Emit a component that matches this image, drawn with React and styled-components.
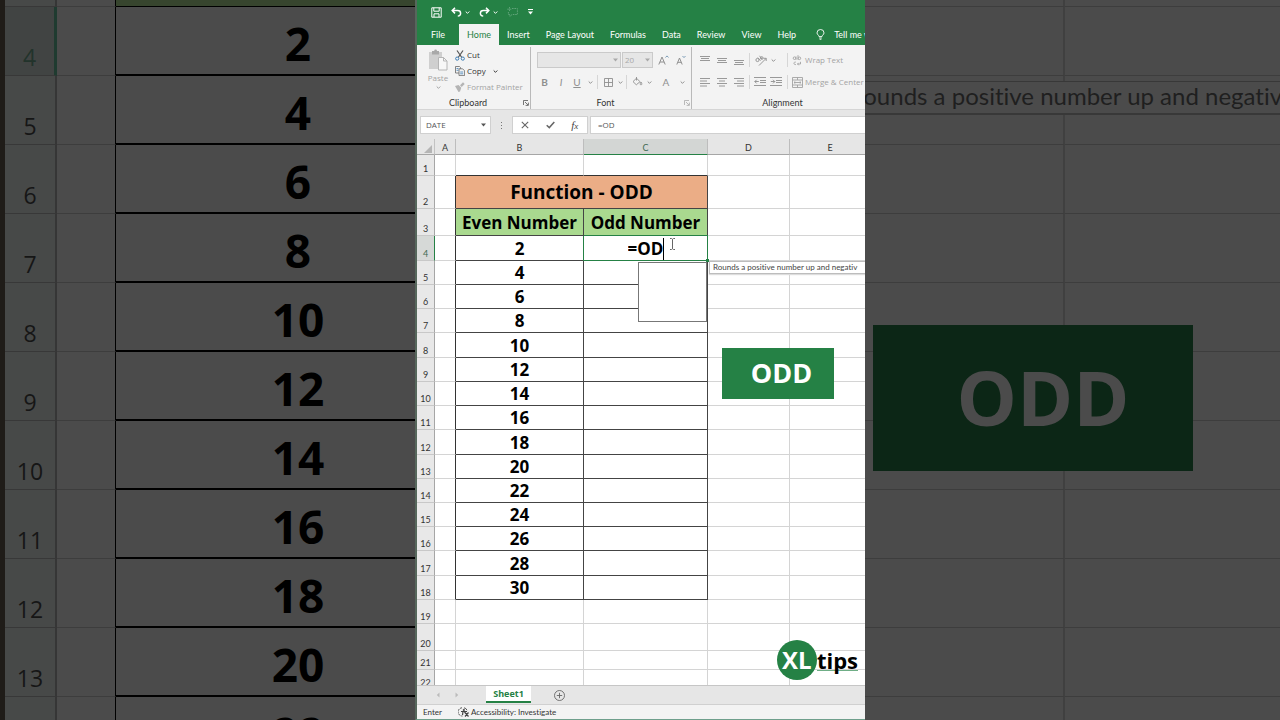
import React, { useState } from 'react';
import styled, { createGlobalStyle } from 'styled-components';

const GREEN = '#258145';
const LATO = 'Lato, "Open Sans", sans-serif';

const tabs = ['File', 'Home', 'Insert', 'Page Layout', 'Formulas', 'Data', 'Review', 'View', 'Help'];

// row number, height, value in column B
const dataRows = [
  [5, 24, 4], [6, 24, 6], [7, 24, 8], [8, 25, 10], [9, 24, 12], [10, 24, 14], [11, 24, 16],
  [12, 25, 18], [13, 24, 20], [14, 24, 22], [15, 24, 24], [16, 24, 26], [17, 25, 28], [18, 24, 30],
];
const emptyRows = [[19, 24], [20, 27], [21, 19], [22, 20]];
const bigRows = [[4, 2], [5, 4], [6, 6], [7, 8], [8, 10], [9, 12], [10, 14], [11, 16], [12, 18], [13, 20], [14, 22]];

const tip = 'Rounds a positive number up and negativ';

const Chevron = ({ color = 'currentColor' }) => (
  <svg width="5" height="5" viewBox="0 0 5 5" fill="none" stroke={color} aria-hidden="true">
    <path d="M.7 1.5 2.5 3.3 4.3 1.5" />
  </svg>
);

const Triangle = () => (
  <svg width="5" height="4" viewBox="0 0 5 4" fill="currentColor" aria-hidden="true"><path d="M0 .5h5L2.5 3.5z" /></svg>
);

const Launcher = () => (
  <svg width="6" height="6" viewBox="0 0 6 6" fill="none" stroke="currentColor" strokeWidth=".8" aria-hidden="true">
    <path d="M.5 5V.5H5M2 2l3 3M5.4 2.6v2.8H2.6" />
  </svg>
);

const Lines = ({ rows }) => (
  <svg width="10" height="9" viewBox="0 0 10 9" stroke="currentColor" strokeWidth=".9" aria-hidden="true">
    {rows.map(([x1, x2, y]) => <path key={y} d={`M${x1} ${y}H${x2}`} />)}
  </svg>
);

const Indent = ({ out }) => (
  <svg width="12" height="10" viewBox="0 0 12 10" stroke="currentColor" fill="none" strokeWidth=".9" aria-hidden="true">
    <path d="M0 .5h12M6 3.500h6M6 5.500h6M0 8.500h12M.8 4.500h4" />
    <path d={out ? 'M2.6 2.8.8 4.6l1.8 1.8' : 'M3 2.8l1.8 1.8L3 6.4'} />
  </svg>
);

const App = () => {
  const [formula, setFormula] = useState('=OD');
  const onFormulaChange = e => setFormula(e.target.value);

  return (
    <Page>
      <GlobalStyle />
      <Backdrop aria-hidden="true" $edge>
        <BigTable>
          <colgroup><col width="52" /><col width="59" /><col width="364" /></colgroup>
          <tbody>
            <BigRow $h={7}><BigHead /><BigCell $line="#000" /><BigValue $green /></BigRow>
            {bigRows.map(([n, value]) => (
              <BigRow key={n} $h={69}>
                <BigHead $active={n === 4}>{n}</BigHead>
                <BigCell $line="#000" />
                <BigValue>{value}</BigValue>
              </BigRow>
            ))}
          </tbody>
        </BigTable>
      </Backdrop>

      <Workbook>
        <TitleBar>
          <TitleButton aria-label="Save">
            <svg width="11" height="11" viewBox="0 0 11 11" fill="none" stroke="#fff">
              <path d="M.8.8h9.4v9.4H.8zM2.8.8v3.4h5.4V.8M3 10V6.8h5V10" />
            </svg>
          </TitleButton>
          <TitleButton aria-label="Undo">
            <svg width="11" height="10" viewBox="0 0 11 10" fill="none" stroke="#fff" strokeWidth="1.5">
              <path d="M4 .8 1.2 3.6 4 6.4M1.4 3.6h5.2c4 0 4 5.4.2 5.4" />
            </svg>
            <Chevron />
          </TitleButton>
          <TitleButton aria-label="Redo">
            <svg width="11" height="10" viewBox="0 0 11 10" fill="none" stroke="#fff" strokeWidth="1.5">
              <path d="M7 .8l2.8 2.8L7 6.4M9.6 3.6H4.4C.4 3.6.4 9 4.2 9" />
            </svg>
            <Chevron />
          </TitleButton>
          <TitleButton aria-label="New comment" disabled>
            <svg width="11" height="10" viewBox="0 0 11 10" fill="none" stroke="#5fa378" strokeDasharray="1.6 .8">
              <path d="M5 1.5h5.4v6H5L3 9.4V7.5H1.4V5M2.5 0v4.4M.3 2.2h4.4" />
            </svg>
          </TitleButton>
          <TitleButton aria-label="Customize toolbar">
            <svg width="7" height="6" viewBox="0 0 7 6" fill="#fff"><path d="M1 0h5v1H1zM1 2.6h5L3.5 5.4z" /></svg>
          </TitleButton>
        </TitleBar>

        <TabBar>
          {tabs.map(name => <Tab key={name} $active={name === 'Home'}>{name}</Tab>)}
          <TellMe>
            <svg width="9" height="11" viewBox="0 0 9 11" fill="none" stroke="#fff" strokeWidth=".9">
              <path d="M3 7.6C3 6.2 1 5.600 1 3.900a3.500 3.400 0 0 1 7 0C8 5.600 6 6.200 6 7.600zM3.200 9h2.600M3.600 10.300h1.800" />
            </svg>
            Tell me what
          </TellMe>
        </TabBar>

        <Ribbon>
          <Group $w={114}>
            <ClipboardBody>
              <PasteButton disabled>
                <svg width="20" height="22" viewBox="0 0 20 22">
                  <path d="M1 3h13v17H1z" fill="#cfcfcf" />
                  <path d="M4 3.500V2h2.200a1.400 1.400 0 0 1 2.800 0H11v3.500H4z" fill="#a9a9a9" />
                  <path d="M10.500 8.500h5l3.500 3.500v9h-8.500z" fill="#f7f7f7" stroke="#b5b5b5" />
                  <path d="M15.500 8.500V12H19" fill="none" stroke="#b5b5b5" />
                </svg>
                Paste
                <Chevron />
              </PasteButton>
              <ClipboardList>
                <RibbonButton>
                  <svg width="10" height="11" viewBox="0 0 10 11" fill="none">
                    <path d="M2 .5l4.800 7M8 .5L3.200 7.500" stroke="#555" strokeWidth="1.200" />
                    <circle cx="2.200" cy="8.600" r="1.600" stroke="#3f7fb5" /><circle cx="7.800" cy="8.600" r="1.600" stroke="#3f7fb5" />
                  </svg>
                  Cut
                </RibbonButton>
                <RibbonButton>
                  <svg width="10" height="10" viewBox="0 0 10 10" fill="#f3f3f3" stroke="#666" strokeWidth=".8">
                    <path d="M.5.500h4l1 1V7h-5z" /><path d="M4 2.800h3.600l2 2v4.800H4z" />
                    <path d="M1.500 2.500h2M1.500 4.300h2M5.200 6h3M5.200 7.800h3" stroke="#3f7fb5" />
                  </svg>
                  Copy
                  <Spacer />
                  <Chevron />
                </RibbonButton>
                <RibbonButton disabled>
                  <svg width="10" height="10" viewBox="0 0 10 10" fill="#b4b4b4">
                    <path d="M0 4l3.500-1 2.800 2.800L5 9.500 3.500 10z" /><path d="M5 3.200 8 .3l1.700 1.700-3 2.900z" />
                  </svg>
                  Format Painter
                </RibbonButton>
              </ClipboardList>
            </ClipboardBody>
            <GroupLabel>Clipboard</GroupLabel>
            <GroupMore aria-label="Clipboard options"><Launcher /></GroupMore>
          </Group>

          <Group $w={161}>
            <ToolRow $left={6} $gap={1}>
              <Combo $w={84}><select aria-label="Font name" disabled><option> </option></select><Triangle /></Combo>
              <Combo $w={31}><select aria-label="Font size" disabled><option>20</option></select><Triangle /></Combo>
              <Tool $w={18} aria-label="Increase font size" disabled>
                <svg width="11" height="10" viewBox="0 0 11 10" fill="none" stroke="currentColor">
                  <path d="M.8 9.500 4 2l3.200 7.500M2 7h4" /><path d="M7.500 2.500 9 .9l1.500 1.600" stroke="#7d9db8" />
                </svg>
              </Tool>
              <Tool $w={16} aria-label="Decrease font size" disabled>
                <svg width="10" height="10" viewBox="0 0 10 10" fill="none" stroke="currentColor">
                  <path d="M.8 9.500 3.500 3l2.700 6.500M1.800 7.300h3.400" /><path d="M6.500 1 8 2.600 9.500 1" stroke="#7d9db8" />
                </svg>
              </Tool>
            </ToolRow>
            <ToolRow $left={5}>
              <Tool $w={17} disabled><b>B</b></Tool>
              <Tool $w={16} disabled><i>I</i></Tool>
              <Tool $w={16} disabled><u>U</u></Tool>
              <Tool $w={10} aria-label="Underline styles" disabled><Chevron /></Tool>
              <Divider />
              <Tool $w={17} aria-label="Borders" disabled>
                <svg width="11" height="11" viewBox="0 0 11 11" fill="none" stroke="currentColor" strokeWidth=".9"><path d="M1.500 1.500h8v8h-8zM5.500 1.500v8M1.500 5.500h8" /></svg>
              </Tool>
              <Tool $w={7} aria-label="Border styles" disabled><Chevron /></Tool>
              <Divider />
              <Tool $w={17} aria-label="Fill color" disabled>
                <svg width="11" height="10" viewBox="0 0 11 10" fill="none" stroke="currentColor" strokeWidth=".9">
                  <path d="M4.500 1.200 8 4.700 4.300 7.800 1 4.600zM4.500 0v3.500M9 5c1.400 2 .9 2.800 0 2.800S7.700 7 9 5" />
                </svg>
              </Tool>
              <Tool $w={7} aria-label="Fill colors" disabled><Chevron /></Tool>
              <Tool $w={26} disabled>A</Tool>
              <Tool $w={6} aria-label="Font colors" disabled><Chevron /></Tool>
            </ToolRow>
            <GroupLabel>Font</GroupLabel>
            <GroupMore aria-label="Font options" $dim><Launcher /></GroupMore>
          </Group>

          <Group $w={193}>
            <ToolRow $left={4}>
              <Tool $w={17} aria-label="Top align" disabled><Lines rows={[[0, 10, 0.5], [1, 9, 2.5], [0, 10, 4.5]]} /></Tool>
              <Tool $w={17} aria-label="Middle align" disabled><Lines rows={[[0, 10, 2.5], [1, 9, 4.5], [0, 10, 6.5]]} /></Tool>
              <Tool $w={17} aria-label="Bottom align" disabled><Lines rows={[[0, 10, 4.5], [1, 9, 6.5], [0, 10, 8.5]]} /></Tool>
              <Divider />
              <Tool $w={18} aria-label="Orientation" disabled>
                <svg width="12" height="11" viewBox="0 0 12 11" fill="none" stroke="currentColor" strokeWidth=".9">
                  <path d="M4 10.500 11 3.500M8.500 3.300H11.200V6" /><circle cx="2.500" cy="5" r="1.600" /><path d="M2.800 2.600l2.800 3M4.500.800l2.600 3.400" /><circle cx="6.800" cy="3" r="1.300" />
                </svg>
              </Tool>
              <Tool $w={6} aria-label="Orientations" disabled><Chevron /></Tool>
              <Push />
              <Divider />
              <RibbonButton disabled $w={94}>
                <svg width="11" height="11" viewBox="0 0 11 11" fill="none" stroke="currentColor" strokeWidth=".9">
                  <circle cx="2.500" cy="3.200" r="1.300" /><path d="M4 1.500v3.300M6 .200v4.600" /><circle cx="7.400" cy="3.300" r="1.300" />
                  <path d="M3.900 7.200C1.500 6.300 1.100 10 3.900 9.600M5.500 9h3V6.800M6.700 7.800 5.500 9l1.200 1.300" />
                </svg>
                Wrap Text
              </RibbonButton>
            </ToolRow>
            <ToolRow $left={4}>
              <Tool $w={17} aria-label="Align left" disabled><Lines rows={[[0, 10, 0.5], [0, 7, 3], [0, 10, 5.5], [0, 7, 8]]} /></Tool>
              <Tool $w={17} aria-label="Center" disabled><Lines rows={[[0, 10, 0.5], [2, 8, 3], [0, 10, 5.5], [2, 8, 8]]} /></Tool>
              <Tool $w={17} aria-label="Align right" disabled><Lines rows={[[0, 10, 0.5], [3, 10, 3], [0, 10, 5.5], [3, 10, 8]]} /></Tool>
              <Divider />
              <Tool $w={16} aria-label="Decrease indent" disabled><Indent out /></Tool>
              <Tool $w={16} aria-label="Increase indent" disabled><Indent /></Tool>
              <Push />
              <Divider />
              <RibbonButton disabled $w={94}>
                <svg width="11" height="11" viewBox="0 0 11 11" fill="none" stroke="currentColor" strokeWidth=".9">
                  <path d="M.5.500h10v10H.5zM.5 3h10M.5 8h10M5.500.500V3M5.500 8v2.500M2 5.500h7M3.300 4.300 2 5.500l1.300 1.200M7.700 4.300 9 5.500 7.700 6.700" />
                </svg>
                Merge &amp; Center
              </RibbonButton>
            </ToolRow>
            <GroupLabel>Alignment</GroupLabel>
          </Group>
        </Ribbon>

        <FormulaBar>
          <NameBox>
            <input aria-label="Name box" defaultValue="DATE" />
            <Triangle />
          </NameBox>
          <Dots><i /><i /><i /></Dots>
          <FormulaButtons>
            <button aria-label="Cancel">
              <svg width="8" height="8" viewBox="0 0 8 8" stroke="#666" strokeWidth="1.100"><path d="M.8.8l6.400 6.400M7.200.8.8 7.200" /></svg>
            </button>
            <button aria-label="Enter">
              <svg width="9" height="8" viewBox="0 0 9 8" fill="none" stroke="#666" strokeWidth="1.500"><path d="M.7 4.200 3.300 6.600 8.300 1" /></svg>
            </button>
            <button aria-label="Insert function"><Fx>f<small>x</small></Fx></button>
          </FormulaButtons>
          <FormulaInput aria-label="Formula bar" value={formula} onChange={onFormulaChange} />
        </FormulaBar>

        <Sheet>
          <Grid>
            <colgroup>
              <col width="18" /><col width="21" /><col width="128" /><col width="124" /><col width="82" /><col />
            </colgroup>
            <thead>
              <Row $h={16}>
                <Corner><svg width="8" height="8" viewBox="0 0 8 8" fill="#b5b5b5"><path d="M8 0v8H0z" /></svg></Corner>
                <ColHead>A</ColHead>
                <ColHead>B</ColHead>
                <ColHead $active>C</ColHead>
                <ColHead>D</ColHead>
                <ColHead>E</ColHead>
              </Row>
            </thead>
            <tbody>
              <Row $h={21}>
                <RowHead>1</RowHead><Cell /><Cell $under /><Cell $under /><Cell /><Cell />
              </Row>
              <Row $h={33}>
                <RowHead>2</RowHead><Cell $side /><TitleCell colSpan={2}>Function - ODD</TitleCell><Cell /><Cell />
              </Row>
              <Row $h={27}>
                <RowHead>3</RowHead><Cell $side /><NameCell>Even Number</NameCell><NameCell>Odd Number</NameCell><Cell /><Cell />
              </Row>
              <Row $h={25}>
                <RowHead $active>4</RowHead>
                <Cell $side />
                <ValueCell>2</ValueCell>
                <ActiveCell><input aria-label="Cell C4" value={formula} onChange={onFormulaChange} /></ActiveCell>
                <Cell /><Cell />
              </Row>
              {dataRows.map(([n, h, value]) => (
                <Row key={n} $h={h}>
                  <RowHead>{n}</RowHead><Cell $side /><ValueCell>{value}</ValueCell><ValueCell /><Cell /><Cell />
                </Row>
              ))}
              {emptyRows.map(([n, h]) => (
                <Row key={n} $h={h}>
                  <RowHead>{n}</RowHead><Cell /><Cell /><Cell /><Cell /><Cell />
                </Row>
              ))}
            </tbody>
          </Grid>
          <Suggestions role="listbox" aria-label="Functions" />
          <Tooltip role="tooltip">{tip}</Tooltip>
          <Pointer width="7" height="12" viewBox="0 0 7 12" fill="none" stroke="#555" strokeWidth=".9" aria-hidden="true">
            <path d="M1 .5h1.500l1 .8 1-.8H6M1 11.500h1.500l1-.8 1 .8H6M3.500 1.300v9.400" />
          </Pointer>
          <Badge>ODD</Badge>
          <Logo><LogoMark>XL</LogoMark><LogoText>tips</LogoText></Logo>
        </Sheet>

        <SheetBar>
          <SheetNav aria-label="Previous sheet" disabled><svg width="4" height="6" viewBox="0 0 4 6" fill="#bbb"><path d="M3.500.500v5L.8 3z" /></svg></SheetNav>
          <SheetNav aria-label="Next sheet" disabled><svg width="4" height="6" viewBox="0 0 4 6" fill="#bbb"><path d="M.5.500v5L3.200 3z" /></svg></SheetNav>
          <SheetTab>Sheet1</SheetTab>
          <AddSheet aria-label="New sheet">
            <svg width="11" height="11" viewBox="0 0 11 11" fill="none" stroke="#666" strokeWidth=".9"><circle cx="5.500" cy="5.500" r="5" /><path d="M5.500 2.800v5.400M2.800 5.500h5.400" /></svg>
          </AddSheet>
        </SheetBar>
        <StatusBar>
          <span>Enter</span>
          <StatusButton>
            <svg width="11" height="10" viewBox="0 0 11 10" fill="none" stroke="#444" strokeWidth=".9">
              <path d="M4 .8A4 4 0 0 0 4.500 9" strokeDasharray="2 .8" /><path d="M6 .8a4 4 0 0 1 3 2.400" />
              <circle cx="5.800" cy="3" r=".7" fill="#444" /><path d="M3 4.500h6M5 4.500 4.500 8M6.500 5l4 4.500M10.500 5.500l-3.500 4" strokeWidth="1.200" />
            </svg>
            Accessibility: Investigate
          </StatusButton>
        </StatusBar>
      </Workbook>

      <Backdrop aria-hidden="true">
        <BigTable>
          <colgroup><col width="200" /><col /></colgroup>
          <tbody>
            <BigRow $h={7}><BigCell /><BigCell /></BigRow>
            {bigRows.map(([n]) => <BigRow key={n} $h={69}><BigCell /><BigCell /></BigRow>)}
          </tbody>
        </BigTable>
        <BigTooltip>{tip}</BigTooltip>
        <BigBadge>ODD</BigBadge>
      </Backdrop>
    </Page>
  );
};

const GlobalStyle = createGlobalStyle`
  * { box-sizing: border-box; }
  body {
    margin: 0;
    overflow: hidden;
    background: #4b4b4b;
    font-family: "Open Sans", "Noto Sans", sans-serif;
    font-variant-ligatures: none;
  }
  button, input, select {
    margin: 0;
    padding: 0;
    border: 0;
    background: none;
    color: inherit;
    font: inherit;
    outline: none;
  }
  svg { flex: none; display: block; }
`;

const Page = styled.div`
  display: grid;
  grid-template-columns: 1fr minmax(450px, 35vw) 1fr;
  height: 100vh;
`;

const Backdrop = styled.div`
  position: relative;
  min-width: 0;
  overflow: hidden;
  background: #4b4b4b;
  border-left: ${p => (p.$edge ? '5px solid #1f1c18' : '0')};
`;

const BigTable = styled.table`
  table-layout: fixed;
  width: calc(100% + 2px);
  border-spacing: 0;
  ${Backdrop}:first-of-type & { width: 475px; }
`;

const BigRow = styled.tr`
  height: ${p => p.$h}px;
`;

const BigCell = styled.td`
  padding: 0;
  border-right: ${p => (p.$line ? '1px' : '2px')} solid ${p => p.$line || '#404040'};
  border-bottom: 1px solid #3d3d3d;
`;

const BigHead = styled.th`
  padding: 0 0 6px;
  border-right: ${p => (p.$active ? '3px solid #1f3b30' : '2px solid #363636')};
  border-bottom: 1px solid #383838;
  background: ${p => (p.$active ? '#414443' : '#474948')};
  color: ${p => (p.$active ? '#22332b' : '#161616')};
  font-size: 23px;
  font-weight: 400;
  line-height: 24px;
  vertical-align: bottom;
`;

const BigValue = styled.td`
  padding: ${p => (p.$green ? 0 : 4)}px 0 0;
  border-bottom: ${p => (p.$green ? 1 : 2)}px solid #000;
  background: ${p => (p.$green ? '#37452e' : 'transparent')};
  color: #000;
  font-size: 46px;
  font-weight: 700;
  line-height: 54px;
  text-align: center;
`;

const BigTooltip = styled.div`
  position: absolute;
  top: 81px;
  left: -16px;
  right: 0;
  height: 34px;
  overflow: hidden;
  border: solid #383838;
  border-width: 1px 0 2px;
  background: #4b4b4b;
  color: #1f1f1f;
  font-family: ${LATO};
  font-size: 24px;
  line-height: 28px;
  white-space: nowrap;
`;

const BigBadge = styled.div`
  position: absolute;
  top: 325px;
  left: 8px;
  width: 320px;
  height: 146px;
  padding-left: 20px;
  background: #0c2616;
  color: #4b4b4b;
  font-size: 76px;
  font-weight: 700;
  line-height: 144px;
  text-align: center;
`;

const Workbook = styled.main`
  display: flex;
  flex-direction: column;
  min-width: 0;
  min-height: 0;
  overflow: hidden;
  border-left: 2px solid #56675c;
  border-bottom: 1px solid #6f9f8c;
  background: #f3f3f3;
  color: #333;
  font-size: 8px;
  line-height: 12px;
`;

const TitleBar = styled.header`
  display: flex;
  align-items: center;
  gap: 9px;
  height: 24px;
  padding-left: 14px;
  background: ${GREEN};
`;

const TitleButton = styled.button`
  display: flex;
  align-items: center;
  gap: 3px;
  color: #fff;
`;

const TabBar = styled.nav`
  display: flex;
  height: 21px;
  padding-left: 6px;
  background: ${GREEN};
  font-family: ${LATO};
  font-size: 9px;
`;

const Tab = styled.button`
  padding: 0 8px;
  background: ${p => (p.$active ? '#f3f3f3' : 'transparent')};
  color: ${p => (p.$active ? GREEN : '#fff')};
  white-space: nowrap;
  &:first-child { margin-right: 6px; }
`;

const TellMe = styled.button`
  display: flex;
  align-items: center;
  gap: 9px;
  margin-left: 12px;
  color: #fff;
  white-space: nowrap;
`;

const Ribbon = styled.section`
  display: flex;
  height: 65px;
  border-bottom: 1px solid #d5d5d5;
`;

const Group = styled.div`
  position: relative;
  display: flex;
  flex: 0 0 ${p => p.$w}px;
  flex-direction: column;
  margin-top: 2px;
  border-right: 1px solid #b9b9b9;
`;

const GroupLabel = styled.div`
  margin-top: auto;
  padding-right: 11px;
  color: #333;
  font-family: ${LATO};
  font-size: 9px;
  text-align: center;
`;

const GroupMore = styled.button`
  position: absolute;
  right: 1px;
  bottom: 3px;
  color: ${p => (p.$dim ? '#aaa' : '#555')};
`;

const ClipboardBody = styled.div`
  display: flex;
  gap: 6px;
  padding-left: 10px;
`;

const PasteButton = styled.button`
  display: flex;
  flex-direction: column;
  align-items: center;
  gap: 1px;
  width: 22px;
  padding-top: 2px;
  color: #a3a3a3;
`;

const ClipboardList = styled.div`
  display: flex;
  flex-direction: column;
`;

const RibbonButton = styled.button`
  display: flex;
  align-items: center;
  gap: 2px;
  flex: none;
  width: ${p => (p.$w ? p.$w + 'px' : 'auto')};
  height: 16px;
  padding-left: ${p => (p.$w ? 2 : 0)}px;
  white-space: nowrap;
  &:disabled { color: #a3a3a3; }
`;

const Spacer = styled.span`
  flex: 0 0 3px;
`;

const Push = styled.span`
  flex: 1;
`;

const ToolRow = styled.div`
  display: flex;
  align-items: center;
  gap: ${p => p.$gap || 0}px;
  height: 18px;
  padding-left: ${p => p.$left}px;
  &:first-child { height: 26px; }
`;

const Tool = styled.button`
  display: flex;
  align-items: center;
  justify-content: center;
  flex: 0 0 ${p => p.$w}px;
  height: 16px;
  color: #8f8f8f;
  font-family: ${LATO};
  font-size: 10px;
`;

const Divider = styled.span`
  width: 1px;
  height: 14px;
  margin: 0 2px;
  background: #d6d6d6;
`;

const Combo = styled.span`
  display: flex;
  align-items: center;
  width: ${p => p.$w}px;
  height: 16px;
  padding: 0 2px;
  border: 1px solid #cacaca;
  background: #e6e6e6;
  color: #a9a9a9;
  select {
    flex: 1;
    min-width: 0;
    appearance: none;
    opacity: 1;
  }
`;

const FormulaBar = styled.section`
  display: flex;
  height: 29px;
  padding: 6px 0 5px 3px;
  background: #e6e6e6;
`;

const NameBox = styled.div`
  display: flex;
  align-items: center;
  width: 71px;
  padding: 0 4px 0 5px;
  border: 1px solid #d0d0d0;
  background: #fff;
  color: #555;
  input { flex: 1; min-width: 0; }
`;

const Dots = styled.span`
  display: flex;
  flex-direction: column;
  align-items: center;
  justify-content: center;
  gap: 2px;
  width: 21px;
  i { width: 1px; height: 1px; background: #777; }
`;

const FormulaButtons = styled.div`
  display: flex;
  width: 76px;
  margin-right: 2px;
  border: 1px solid #d0d0d0;
  background: #fff;
  button {
    display: flex;
    flex: 1;
    align-items: center;
    justify-content: center;
  }
`;

const Fx = styled.em`
  color: #444;
  font-family: "Liberation Serif", serif;
  font-size: 11px;
  small { font-size: 9px; }
`;

const FormulaInput = styled.input`
  flex: 1;
  min-width: 0;
  padding-left: 7px;
  border: 1px solid #d0d0d0;
  border-right: 0;
  background: #fff;
  color: #555;
`;

const Sheet = styled.section`
  position: relative;
  flex: 1;
  min-height: 0;
  overflow: hidden;
  background: #fff;
`;

const Grid = styled.table`
  table-layout: fixed;
  width: calc(100% + 6px);
  border-spacing: 0;
  font-family: ${LATO};
  font-size: 9px;
`;

const Row = styled.tr`
  height: ${p => p.$h}px;
`;

const Corner = styled.th`
  padding: 4px 0 0 7px;
  border-right: 1px solid #c2c2c2;
  border-bottom: 1px solid #a6a6a6;
  background: #e6e6e6;
`;

const ColHead = styled.th`
  padding: 3px 0 0;
  border-right: 1px solid #bdbdbd;
  border-bottom: 1px solid ${p => (p.$active ? GREEN : '#a6a6a6')};
  background: ${p => (p.$active ? '#d3d6d4' : '#e6e6e6')};
  color: ${p => (p.$active ? '#3f6b52' : '#333')};
  font-weight: 400;
  line-height: 12px;
`;

const RowHead = styled.th`
  padding: 0;
  border-right: 1px solid ${p => (p.$active ? GREEN : '#a6a6a6')};
  border-bottom: 1px solid #c8c8c8;
  background: ${p => (p.$active ? '#d6d9d7' : '#e8e8e8')};
  color: ${p => (p.$active ? '#3f6b52' : '#333')};
  font-weight: 400;
  line-height: 12px;
  vertical-align: bottom;
`;

const Cell = styled.td`
  padding: 0;
  border-right: 1px solid ${p => (p.$side ? '#333' : '#d4d4d4')};
  border-bottom: 1px solid ${p => (p.$under ? '#333' : '#d4d4d4')};
`;

const ValueCell = styled.td`
  padding: 1px 0 0;
  border-right: 1px solid #444;
  border-bottom: 1px solid #444;
  color: #000;
  font-family: "Open Sans", sans-serif;
  font-size: 17px;
  font-weight: 700;
  line-height: 22px;
  text-align: center;
`;

const NameCell = styled(ValueCell)`
  background: #a9d98f;
`;

const TitleCell = styled(ValueCell)`
  padding: 0;
  background: #ebad86;
  font-size: 19px;
`;

const ActiveCell = styled(ValueCell)`
  position: relative;
  border-right-color: ${GREEN};
  border-bottom-color: ${GREEN};
  box-shadow: 0 -1px 0 ${GREEN}, -1px 0 0 ${GREEN};
  &::after {
    content: "";
    position: absolute;
    right: -2px;
    bottom: -2px;
    width: 3px;
    height: 3px;
    background: ${GREEN};
  }
  input {
    display: block;
    width: 36px;
    height: 22px;
    margin: 0 auto;
    border-right: 1px solid #000;
    text-align: right;
  }
`;

const Suggestions = styled.div`
  position: absolute;
  top: 123px;
  left: 221px;
  width: 69px;
  height: 60px;
  border: 1px solid #777;
  background: #fff;
`;

const Tooltip = styled.div`
  position: absolute;
  top: 122px;
  left: 292px;
  right: 0;
  overflow: hidden;
  padding-left: 3px;
  border: 1px solid #bdbdbd;
  border-right: 0;
  background: #fff;
  box-shadow: 0 1px 1px #ddd;
  color: #444;
  font-family: ${LATO};
  line-height: 11px;
  white-space: nowrap;
`;

const Pointer = styled.svg`
  position: absolute;
  top: 99px;
  left: 252px;
`;

const Badge = styled.div`
  position: absolute;
  top: 209px;
  left: 305px;
  width: 112px;
  height: 51px;
  padding-left: 7px;
  background: ${GREEN};
  color: #fff;
  font-size: 27px;
  font-weight: 700;
  line-height: 50px;
  text-align: center;
`;

const Logo = styled.div`
  position: absolute;
  right: 7px;
  bottom: 5px;
  display: flex;
  align-items: center;
  font-weight: 700;
`;

const LogoMark = styled.span`
  width: 40px;
  border-radius: 50%;
  background: ${GREEN};
  color: #fff;
  font-size: 24px;
  line-height: 40px;
  text-align: center;
`;

const LogoText = styled.span`
  border-bottom: 1px solid #6fae86;
  color: #000;
  font-size: 22px;
  line-height: 20px;
`;

const SheetBar = styled.nav`
  display: flex;
  height: 19px;
  padding-left: 11px;
  border-top: 1px solid #c6c6c6;
  background: #e6e6e6;
`;

const SheetNav = styled.button`
  display: flex;
  align-items: center;
  justify-content: center;
  width: 19px;
`;

const SheetTab = styled.button`
  width: 45px;
  height: 17px;
  margin-left: 20px;
  border-bottom: 2px solid ${GREEN};
  background: #fff;
  color: ${GREEN};
  font-size: 9px;
  font-weight: 700;
`;

const AddSheet = styled.button`
  margin-left: 23px;
`;

const StatusBar = styled.footer`
  display: flex;
  align-items: center;
  gap: 16px;
  height: 15px;
  padding-left: 6px;
  border-top: 1px solid #d0d0d0;
  font-family: ${LATO};
`;

const StatusButton = styled.button`
  display: flex;
  align-items: center;
  gap: 2px;
`;

export default App;
